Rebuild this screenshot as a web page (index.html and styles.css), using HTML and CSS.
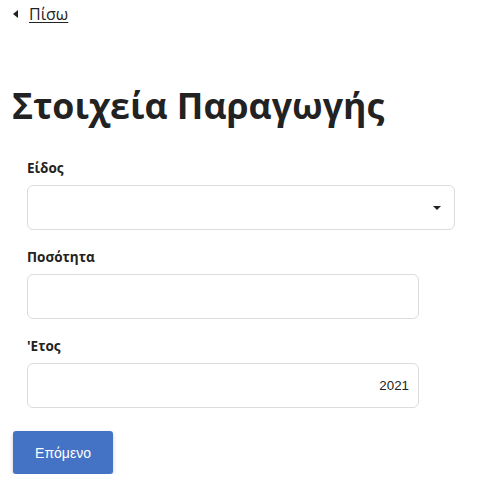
FILE: index.html
```html
<!DOCTYPE html>
<html lang="el">
<head>
<meta charset="utf-8">
<title>Στοιχεία Παραγωγής</title>
<link rel="stylesheet" href="styles.css">
</head>
<body>
<div class="page">
  <a class="back" href="#"><span class="back-arrow"></span><span class="back-text">Πίσω</span></a>
  <h1 class="title">Στοιχεία Παραγωγής</h1>
  <form class="form">
    <div class="field">
      <label class="label">Είδος</label>
      <div class="control control-select"><span class="caret"></span></div>
    </div>
    <div class="field">
      <label class="label">Ποσότητα</label>
      <div class="control control-input"></div>
    </div>
    <div class="field">
      <label class="label">'Ετος</label>
      <div class="control control-input control-value">2021</div>
    </div>
  </form>
  <button class="btn" type="button">Επόμενο</button>
</div>
</body>
</html>
```

FILE: styles.css
```css
* { box-sizing: border-box; }
html, body { margin: 0; padding: 0; background: #fff; }
body { font-family: "Open Sans", "Noto Sans", sans-serif; color: #222; }
.page { padding: 4px 12px 0 12px; display: flex; flex-direction: column; align-items: flex-start; }
.back { display: flex; align-items: center; gap: 11px; color: #222; text-decoration: none; font-size: 16px; line-height: 20px; }
.back-arrow { width: 0; height: 0; border-top: 4px solid transparent; border-bottom: 4px solid transparent; border-right: 5px solid #222; margin-left: 1px; }
.back-text { text-decoration: underline; text-underline-offset: 2px; }
.title { margin: 56px 0 0 0; font-size: 35.7px; font-weight: 700; line-height: 50px; color: #222; }
.form { display: flex; flex-direction: column; gap: 18px; padding: 0 0 0 15px; margin-top: 29px; width: 100%; }
.field { display: flex; flex-direction: column; gap: 8px; }
.label { font-size: 13.5px; font-weight: 700; line-height: 18px; color: #222; }
.control { height: 45px; border: 1px solid #dcdcdc; border-radius: 6px; background: #fff; display: flex; align-items: center; justify-content: flex-end; }
.control-select { width: 428px; padding-right: 13px; }
.control-input { width: 392px; }
.control-value { font-family: "Liberation Sans", Arial, sans-serif; font-size: 13.33px; color: #222; padding-right: 9px; }
.caret { width: 0; height: 0; border-left: 4px solid transparent; border-right: 4px solid transparent; border-top: 4px solid #222; }
.btn { margin: 23px 0 0 1px; width: 100px; height: 43px; border: none; border-radius: 3px; background: #4472c4; color: #fff; font-family: "Liberation Sans", Arial, sans-serif; font-size: 14px; box-shadow: 0 2px 4px rgba(0,0,0,0.2); }
```
